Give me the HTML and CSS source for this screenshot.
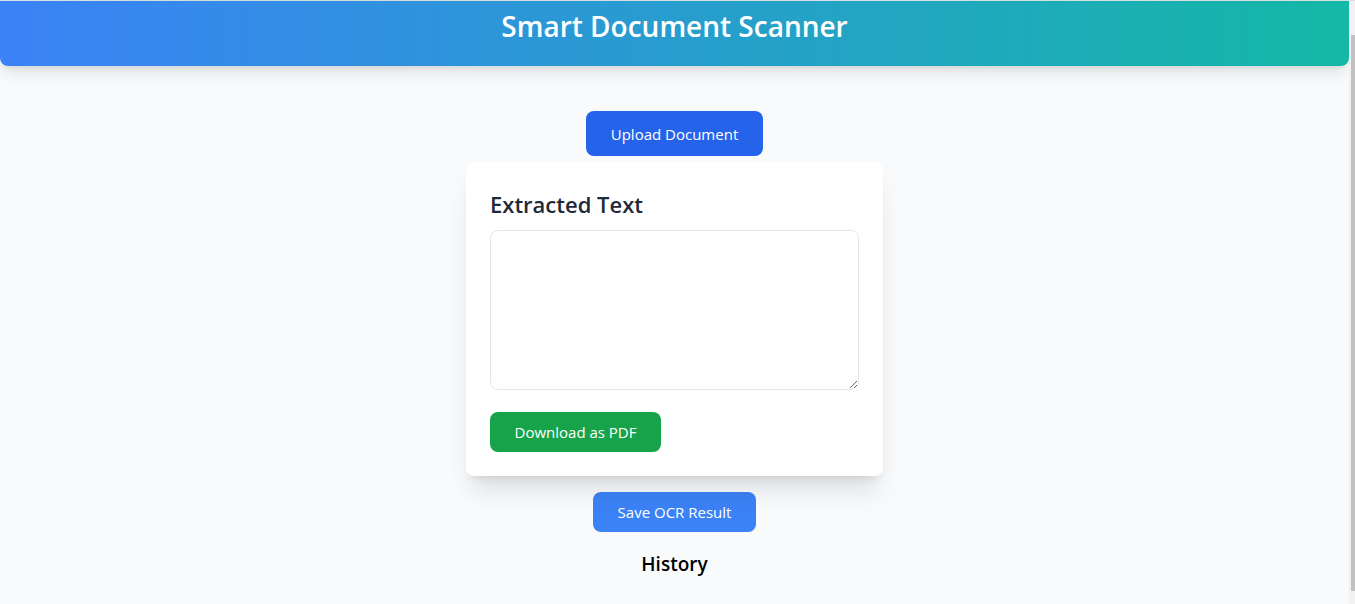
FILE: index.html
```html
<!DOCTYPE html>
<html lang="en">
<head>
<meta charset="utf-8">
<meta name="viewport" content="width=device-width, initial-scale=1">
<title>Smart Document Scanner</title>
<link rel="stylesheet" href="styles.css">
</head>
<body>
<div class="shell">
  <div class="page">
    <header class="header">
      <h1 class="header-title">Smart Document Scanner</h1>
    </header>
    <main class="main">
      <button type="button" class="button button-upload">Upload Document</button>
      <section class="card">
        <h2 class="card-title"><label for="extracted">Extracted Text</label></h2>
        <textarea id="extracted" class="text-area"></textarea>
        <button type="button" class="button button-download">Download as PDF</button>
      </section>
      <button type="button" class="button button-save">Save OCR Result</button>
      <h3 class="history-title">History</h3>
    </main>
  </div>
  <div class="scrollbar" aria-hidden="true"><div class="scrollbar-thumb"></div></div>
</div>
</body>
</html>
```

FILE: styles.css
```css
* {
  box-sizing: border-box;
}

body {
  margin: 0;
  background: #f8fafc;
  color: #000;
  font-family: "Segoe UI", "Open Sans", "Noto Sans", sans-serif;
  font-size: 15px;
  line-height: 24px;
}

h1, h2, h3 {
  margin: 0;
  font-weight: 600;
}

.shell {
  display: flex;
  min-height: 100vh;
  border-top: 1px solid #d5dfe0;
}

.page {
  flex: 1;
  min-width: 0;
}

.header {
  padding: 7px 24px 22px;
  border-radius: 0 0 8px 8px;
  background: linear-gradient(to right, #3b82f6, #14b8a6);
  box-shadow: 0 10px 15px -3px rgba(0, 0, 0, 0.1), 0 4px 6px -4px rgba(0, 0, 0, 0.1);
  color: #fff;
  text-align: center;
}

.header-title {
  font-size: 28px;
  line-height: 36px;
}

.main {
  display: flex;
  flex-direction: column;
  align-items: center;
  padding: 45px 16px 24px;
}

.button {
  padding: 8px 16px;
  border: 0;
  border-radius: 8px;
  color: #fff;
  font: inherit;
  cursor: pointer;
}

.button-upload {
  min-width: 177px;
  padding: 11px 16px 10px;
  background: #2563eb;
}

.button-download {
  min-width: 171px;
  background: #16a34a;
}

.button-save {
  min-width: 163px;
  background: #3b82f6;
}

/* Positioned so its shadow falls over the button below. */
.card {
  position: relative;
  width: 100%;
  max-width: 417px;
  margin: 6px 0 16px;
  padding: 26px 24px 24px;
  border-radius: 8px;
  background: #fff;
  box-shadow: 0 20px 25px -5px rgba(0, 0, 0, 0.1), 0 8px 10px -6px rgba(0, 0, 0, 0.1);
}

.card-title {
  margin-bottom: 10px;
  color: #1f2937;
  font-size: 22px;
  line-height: 32px;
}

.text-area {
  display: block;
  width: 100%;
  height: 160px;
  margin-bottom: 22px;
  padding: 16px;
  border: 1px solid #e5e7eb;
  border-radius: 8px;
  background: #fff;
  font: inherit;
  resize: vertical;
}

.history-title {
  margin-top: 18px;
  font-size: 19px;
  line-height: 28px;
}

.scrollbar {
  flex: none;
  width: 6px;
  padding: 34px 0 13px 2px;
  display: flex;
  background: #f1f1f1;
}

.scrollbar-thumb {
  flex: 1;
  background: #c1c1c1;
}
```
